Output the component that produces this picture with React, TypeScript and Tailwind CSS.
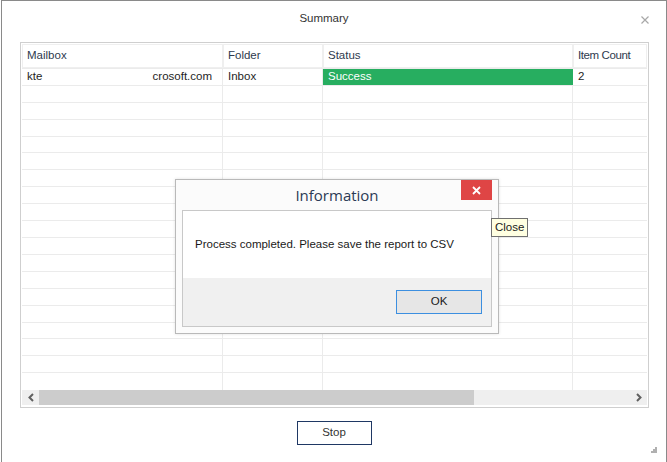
import React from "react";

// Summary window with a results grid and a modal "Information" box on top.

const COLS = [
  { label: "Mailbox", w: "w-[201px]" },
  { label: "Folder", w: "w-[100px]" },
  { label: "Status", w: "w-[250px]" },
  { label: "Item Count", w: "flex-1" },
];

function Chevron({ dir }: { dir: "left" | "right" }) {
  return (
    <svg width="8" height="9" viewBox="0 0 8 9" className="text-[#606060]">
      {dir === "left" ? (
        <path d="M6 1 L2.5 4.5 L6 8" fill="none" stroke="currentColor" strokeWidth="2" />
      ) : (
        <path d="M2 1 L5.5 4.5 L2 8" fill="none" stroke="currentColor" strokeWidth="2" />
      )}
    </svg>
  );
}

function EmptyRow({ last }: { last?: boolean }) {
  return (
    <div className={`flex h-[17px] ${last ? "" : "border-b border-[#ebebeb]"}`}>
      <div className="w-[201px] border-r border-[#ebebeb]" />
      <div className="w-[100px] border-r border-[#ebebeb]" />
      <div className="w-[250px] border-r border-[#ebebeb]" />
      <div className="flex-1" />
    </div>
  );
}

export default function App() {
  const empty = Array.from({ length: 18 }, (_, i) => i);

  return (
    <div
      className="w-[667px] h-[462px] bg-white overflow-hidden relative text-[11.5px] text-[#1e1e1e]"
      style={{ fontFamily: '"Liberation Sans", Arial, sans-serif' }}
    >
      <div className="ml-px w-[666px] h-[462px] border-t border-l border-r border-[#8a8a8a] flex flex-col">
        {/* Title bar */}
        <div className="h-[41px] flex items-center justify-center relative pr-[20px]">
          <span className="text-[#333] -mt-[5px]">Summary</span>
          <svg width="8" height="8" viewBox="0 0 8 8" className="absolute left-[639px] top-[15px]">
            <path d="M0.5 0.5 L7.5 7.5 M7.5 0.5 L0.5 7.5" stroke="#a8a8a8" strokeWidth="1.2" />
          </svg>
        </div>

        {/* Grid */}
        <div className="ml-[18px] w-[629px] h-[366px] border border-[#cfcfcf] p-px flex flex-col">
          <div className="flex h-[25px] border-b border-[#ebebeb]">
            {COLS.map((c) => (
              <div
                key={c.label}
                className={`${c.w} border border-[#efefef] flex items-center pl-[4px] text-[#2e3a4e] ${
                  c.label === "Item Count" ? "tracking-[-0.4px]" : ""
                }`}
              >
                {c.label}
              </div>
            ))}
          </div>
          <div className="flex h-[17px] border-b border-[#ebebeb]">
            <div className="w-[201px] border-r border-[#ebebeb] flex items-center justify-between pl-[5px] pr-[10px]">
              <span>kte</span>
              <span>crosoft.com</span>
            </div>
            <div className="w-[100px] border-r border-[#ebebeb] flex items-center pl-[5px]">Inbox</div>
            <div className="w-[250px] bg-[#27ae60] text-white flex items-center pl-[5px]">Success</div>
            <div className="flex-1 flex items-center pl-[5px]">2</div>
          </div>
          {empty.map((i) => (
            <EmptyRow key={i} last={i === empty.length - 1} />
          ))}
          {/* Horizontal scrollbar */}
          <div className="h-[15px] bg-[#efefef] flex items-center mt-auto mb-px">
            <div className="w-[17px] flex justify-center">
              <Chevron dir="left" />
            </div>
            <div className="w-[435px] h-full bg-[#cccccc]" />
            <div className="flex-1" />
            <div className="w-[17px] flex justify-center">
              <Chevron dir="right" />
            </div>
          </div>
        </div>

        {/* Footer */}
        <div className="flex justify-center mt-[13px]">
          <button className="w-[75px] h-[24px] border border-[#1f3864] bg-white text-[#333] text-[11.5px] flex items-center justify-center">
            Stop
          </button>
        </div>
      </div>

      {/* Resize grip */}
      <svg width="6" height="6" viewBox="0 0 6 6" className="absolute left-[651px] top-[447px]">
        <rect x="4" y="0" width="2" height="2" fill="#b0b0b0" />
        <rect x="2" y="2" width="2" height="2" fill="#b0b0b0" />
        <rect x="4" y="2" width="2" height="2" fill="#b0b0b0" />
        <rect x="0" y="4" width="2" height="2" fill="#b0b0b0" />
        <rect x="2" y="4" width="2" height="2" fill="#b0b0b0" />
        <rect x="4" y="4" width="2" height="2" fill="#b0b0b0" />
      </svg>

      {/* Information dialog */}
      <div className="absolute left-[175px] top-[179px] w-[324px] h-[155px] border border-[#b9b9b9] bg-[#fbfbfb] flex flex-col px-[6px] pb-[6px] shadow-[0_0_3px_rgba(0,0,0,0.12)]">
        <div className="h-[30px] flex items-center justify-center relative">
          <span
            className="text-[15px] text-[#2b3a55]"
            style={{ fontFamily: '"Open Sans", "Liberation Sans", sans-serif' }}
          >
            Information
          </span>
          <div className="absolute right-0 top-0 w-[31px] h-[20px] bg-[#df4545] flex items-center justify-center">
            <svg width="9" height="9" viewBox="0 0 9 9">
              <path d="M1 1 L8 8 M8 1 L1 8" stroke="white" strokeWidth="1.8" />
            </svg>
          </div>
        </div>
        <div className="flex-1 border border-[#c8c8c8] flex flex-col">
          <div className="h-[67px] bg-white flex items-center pl-[12px] text-[#1a1a1a]">
            Process completed. Please save the report to CSV
          </div>
          <div className="flex-1 bg-[#f0f0f0] flex justify-end items-start pt-[12px] pr-[9px]">
            <button className="w-[86px] h-[24px] border border-[#3c8fe0] bg-[#e6e6e6] text-[#1a1a1a]">
              OK
            </button>
          </div>
        </div>
      </div>

      {/* Tooltip */}
      <div className="absolute left-[491px] top-[218px] h-[19px] px-[3px] border border-[#707070] bg-[#ffffe1] text-[#1a1a1a] flex items-center">
        Close
      </div>
    </div>
  );
}
